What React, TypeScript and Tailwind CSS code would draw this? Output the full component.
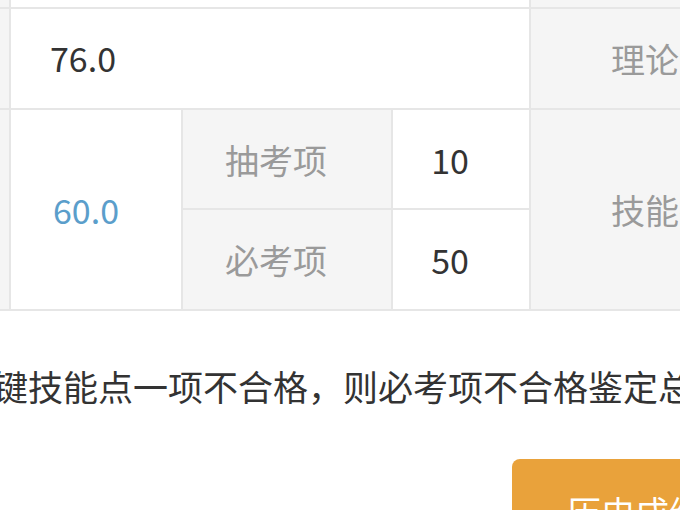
import React from 'react';

const Cell: React.FC<{ className?: string; children?: React.ReactNode }> = ({ className = '', children }) => (
  <div className={`flex items-center ${className}`}>{children}</div>
);

export default function App() {
  return (
    <div className="w-[680px] h-[510px] overflow-hidden bg-white font-['Noto_Sans_CJK_SC',sans-serif] text-[34px] text-[#333]">
      <div className="w-[780px] grid grid-cols-[9px_170px_208px_136px_249px] grid-rows-[7px_99px_98px_99px] gap-[2px] bg-[#e6e6e6] border-b-2 border-[#e6e6e6]">
        {/* partial row above */}
        <Cell className="bg-[#f5f5f5]" />
        <Cell className="col-span-3 bg-white" />
        <Cell className="bg-[#f5f5f5]" />

        {/* theory score */}
        <Cell className="bg-[#f5f5f5]" />
        <Cell className="col-span-3 bg-white pl-[39px] pb-[3px]">76.0</Cell>
        <Cell className="bg-[#f5f5f5] pl-[80px] text-[#9a9a9a] whitespace-nowrap">理论知识</Cell>

        {/* skill score */}
        <Cell className="row-span-2 bg-[#f5f5f5]" />
        <Cell className="row-span-2 bg-white justify-center pr-[20px] text-[#5b9ecb]">60.0</Cell>
        <Cell className="bg-[#f5f5f5] justify-center pr-[22px] text-[#9a9a9a]">抽考项</Cell>
        <Cell className="bg-white justify-center pr-[22px]">10</Cell>
        <Cell className="row-span-2 bg-[#f5f5f5] pl-[80px] text-[#9a9a9a] whitespace-nowrap">技能操作</Cell>
        <Cell className="bg-[#f5f5f5] justify-center pr-[22px] text-[#9a9a9a]">必考项</Cell>
        <Cell className="bg-white justify-center pr-[22px]">50</Cell>
      </div>

      <p className="mt-[49px] ml-[-42px] whitespace-nowrap text-[35px] leading-[52px]">
        关键技能点一项不合格，则必考项不合格鉴定总成绩不合格
      </p>

      <div className="mt-[47px] ml-[512px] w-[220px]">
        <button className="w-full h-[104px] rounded-[8px] bg-[#e9a23b] text-white flex items-center pl-[55px] whitespace-nowrap">
          历史成绩
        </button>
      </div>
    </div>
  );
}
